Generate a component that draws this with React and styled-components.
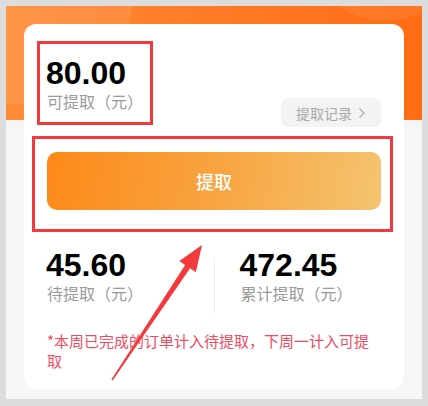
import styled, { createGlobalStyle } from 'styled-components';

const GlobalStyle = createGlobalStyle`
	html, body {
		margin: 0;
		padding: 0;
		background: #dcdcdc;
	}
	body {
		font-family: "Liberation Sans", "Noto Sans CJK SC", sans-serif;
	}
`;

const Frame = styled.div`
	width: 428px;
	height: 406px;
	box-sizing: border-box;
	padding: 6px 6px 7px;
	background: #dcdcdc;
`;

const Screen = styled.div`
	position: relative;
	height: 100%;
	box-sizing: border-box;
	padding: 18px 18px 0;
	background:
		radial-gradient(circle at 10px -20px, rgba(255, 255, 255, 0.09) 0 118px, transparent 119px) top left / 100% 114px no-repeat,
		radial-gradient(circle at 380px -70px, rgba(255, 255, 255, 0.07) 0 84px, transparent 85px) top left / 100% 114px no-repeat,
		linear-gradient(90deg, #ff8a36, #ff6c14) top left / 100% 114px no-repeat,
		#f6f6f6;
	overflow: hidden;
`;

const Card = styled.div`
	height: 365px;
	box-sizing: border-box;
	padding: 31px 23px 0;
	background: #fff;
	border-radius: 12px;
`;

const AmountRow = styled.div`
	display: flex;
	justify-content: space-between;
	align-items: flex-end;
`;

const Figure = styled.div`
	padding-bottom: ${(p) => p.$pad || 0}px;
`;

const Number = styled.div`
	font-family: "Liberation Sans", sans-serif;
	font-size: 32px;
	font-weight: 700;
	line-height: 36px;
	color: #000;
	margin-left: -1px;
`;

const Label = styled.div`
	font-family: "Noto Sans CJK SC", sans-serif;
	font-size: 16px;
	line-height: 20px;
	color: #9a9a9a;
`;

const RecordPill = styled.button`
	display: flex;
	align-items: center;
	justify-content: center;
	gap: 6px;
	width: 100px;
	height: 29px;
	padding: 0;
	border: none;
	border-radius: 7px;
	background: #f3f3f3;
	color: #a8a8a8;
	font-family: "Noto Sans CJK SC", sans-serif;
	font-size: 14px;
`;

const WithdrawButton = styled.button`
	display: block;
	width: 100%;
	height: 58px;
	margin-top: 25px;
	border: none;
	border-radius: 10px;
	background: linear-gradient(100deg, #fd8919 0%, #f8a440 50%, #f4c470 100%);
	color: #fff;
	font-family: "Noto Sans CJK SC", sans-serif;
	font-size: 18px;
	font-weight: 500;
`;

const Rule = styled.div`
	height: 1px;
	margin-top: 14px;
	background: #f3f3f3;
`;

const Stats = styled.div`
	display: grid;
	grid-template-columns: 1fr 1px 1fr;
	padding-top: 22px;
`;

const StatCol = styled.div`
	padding: 0 0 11px ${(p) => p.$indent || 0}px;
`;

const VDivider = styled.div`
	margin-top: 10px;
	background: #eeeeee;
`;

const Note = styled.p`
	margin: 17px 0 0;
	font-family: "Noto Sans CJK SC", sans-serif;
	font-size: 15px;
	line-height: 20px;
	color: #ef4c62;
`;

const Markup = styled.div`
	position: absolute;
	inset: 0;
	pointer-events: none;
`;

const MarkBox = styled.div`
	position: absolute;
	box-sizing: border-box;
	border: 3px solid #f23a3c;
`;

const Arrow = styled.svg`
	position: absolute;
	left: 0;
	top: 0;
`;

const Chevron = () => (
	<svg width="8" height="12" viewBox="0 0 8 12">
		<path d="M1.5 1.5 L6 6 L1.5 10.5" fill="none" stroke="#b0b0b0" strokeWidth="1.4" />
	</svg>
);

const boxes = [
	{ left: 31, top: 35, width: 116, height: 84 },
	{ left: 26, top: 130, width: 361, height: 96 },
];

export default function App() {
	return (
		<>
			<GlobalStyle />
			<Frame>
				<Screen>
					<Card>
						<AmountRow>
							<Figure $pad={16}>
								<Number>80.00</Number>
								<Label>可提取（元）</Label>
							</Figure>
							<RecordPill>
								提取记录
								<Chevron />
							</RecordPill>
						</AmountRow>
						<WithdrawButton>提取</WithdrawButton>
						<Rule />
						<Stats>
							<StatCol>
								<Number>45.60</Number>
								<Label>待提取（元）</Label>
							</StatCol>
							<VDivider />
							<StatCol $indent={26}>
								<Number>472.45</Number>
								<Label>累计提取（元）</Label>
							</StatCol>
						</Stats>
						<Note>*本周已完成的订单计入待提取，下周一计入可提取</Note>
					</Card>
					<Markup>
						{boxes.map((b, i) => (
							<MarkBox key={i} style={b} />
						))}
						<Arrow width="416" height="393" viewBox="0 0 416 393">
							<polygon
								points="105.4,373.6 179.1,258.9 173.3,255 196,239 189.9,266.2 184.1,262.3 106.6,374.4"
								fill="#f23a3c"
							/>
						</Arrow>
					</Markup>
				</Screen>
			</Frame>
		</>
	);
}
